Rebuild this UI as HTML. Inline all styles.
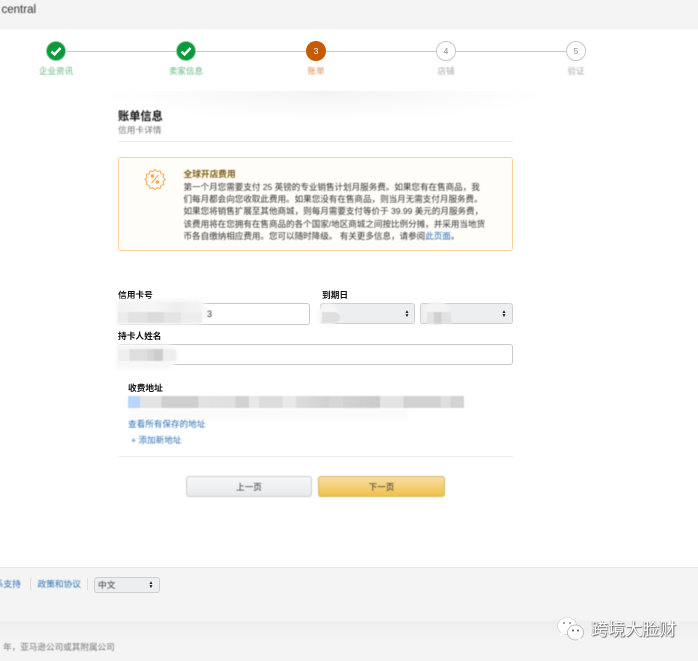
<!DOCTYPE html>
<html><head><meta charset="utf-8">
<style>
html,body{margin:0;padding:0;background:#fff}
#p{position:relative;width:698px;height:661px;overflow:hidden;background:#fff;font-family:"Liberation Sans","Noto Sans CJK SC",sans-serif;color:#222}
#p div,#p svg{position:absolute}
.t{white-space:nowrap;filter:blur(.4px)}
.c{width:20px;height:20px;border-radius:50%;top:41px;text-align:center;font-size:8.5px;line-height:20px;box-sizing:border-box}
.l{top:65px;width:60px;text-align:center;font-size:8.5px;line-height:12px;white-space:nowrap;filter:blur(.4px)}
.lb{font-size:8.7px;font-weight:bold;line-height:12px;white-space:nowrap;color:#111;filter:blur(.3px)}
.inp{background:#fff;border:1px solid #c9c9c9;border-radius:3px;box-sizing:border-box}
.sel{background:#eceef0;border:1px solid #cfcfcf;border-radius:3px;box-sizing:border-box}
.ar{font-size:5px;line-height:4px;color:#222;text-align:center;width:6px}
.m{filter:blur(.6px)}
</style></head><body><div id="p">
<div style="left:0;top:0;width:698px;height:29px;background:#f4f4f4"></div>
<div class="t" style="left:1.500px;top:2px;font-size:11.5px;line-height:17px;color:#333">central</div>

<div style="left:56px;top:51px;width:520px;height:1px;background:#ccc"></div>
<div class="c" style="left:46px;background:#0a9a3c;border:1px solid #8fd0a5"></div>
<svg style="left:46px;top:41px" width="20" height="20"><path d="M5.500 10.500l3 3 6-6.500" fill="none" stroke="#fff" stroke-width="2.400"/></svg>
<div class="c" style="left:176px;background:#0a9a3c;border:1px solid #8fd0a5"></div>
<svg style="left:176px;top:41px" width="20" height="20"><path d="M5.500 10.500l3 3 6-6.500" fill="none" stroke="#fff" stroke-width="2.400"/></svg>
<div class="c" style="left:306px;background:#c55a00;color:#fff">3</div>
<div class="c" style="left:436px;background:#fff;border:1px solid #c8c8c8;color:#888;line-height:18px">4</div>
<div class="c" style="left:566px;background:#fff;border:1px solid #c8c8c8;color:#888;line-height:18px">5</div>
<div class="l" style="left:26px;color:#62b67f">企业资讯</div>
<div class="l" style="left:156px;color:#62b67f">卖家信息</div>
<div class="l" style="left:286px;color:#dc8f55">账单</div>
<div class="l" style="left:416px;color:#aaa">店铺</div>
<div class="l" style="left:546px;color:#aaa">验证</div>

<div style="left:98px;top:91px;width:452px;height:30px;background:radial-gradient(ellipse 50% 100% at 50% 0,#f3f3f3 0,#f9f9f9 45%,#fff 100%)"></div>

<div class="t" style="left:118px;top:109.500px;font-size:11.200px;font-weight:bold;line-height:15px;color:#111">账单信息</div>
<div class="t" style="left:118px;top:124px;font-size:8.700px;line-height:12px;color:#777">信用卡详情</div>
<div style="left:118px;top:141px;width:395px;height:1px;background:#eee"></div>

<div style="left:118px;top:157px;width:395px;height:94px;box-sizing:border-box;background:#fffdf9;border:1px solid #f9d49a;border-radius:3px"></div>
<svg style="left:144px;top:168px" width="22" height="22" viewBox="0 0 22 22" fill="none" stroke="#f8a94f" stroke-width="1"><path d="M11 1.500l2.200 2.100 2.900-.8.900 2.900 2.900.9-.8 2.900 2.100 2-2.100 2.200.8 2.900-2.900.9-.9 2.900-2.900-.8-2.200 2.100-2-2.100-2.900.8-.9-2.900-2.900-.9.8-2.900-2.100-2.200 2.100-2-.8-2.900 2.900-.9.900-2.900 2.900.8z"/><path d="M7.500 15l7-8"/><circle cx="8.500" cy="8" r="1.300" fill="#f8a94f"/><circle cx="13.500" cy="14" r="1.300" fill="#f8a94f"/></svg>
<div class="t" style="left:183.500px;top:168px;font-size:8.700px;font-weight:bold;line-height:12px;color:#7f5f10">全球开店费用</div>
<div class="t" style="left:183.500px;top:180.500px;font-size:8.560px;line-height:12.400px;color:#333">第一个月您需要支付 25 英镑的专业销售计划月服务费。如果您有在售商品，我<br>们每月都会向您收取此费用。如果您没有在售商品，则当月无需支付月服务费。<br>如果您将销售扩展至其他商城，则每月需要支付等价于 39.99 美元的月服务费，<br>该费用将在您拥有在售商品的各个国家/地区商城之间按比例分摊，并采用当地货<br>币各自缴纳相应费用。您可以随时降级。 有关更多信息，请参阅<span style="color:#2a72b8">此页面</span>。</div>

<div class="lb" style="left:118px;top:289px">信用卡号</div>
<div class="lb" style="left:322px;top:289px">到期日</div>
<div class="inp" style="left:118px;top:303px;width:192px;height:22px"></div>
<div class="m" style="left:116px;top:299px;width:92px;height:26px;border-radius:0 14px 14px 0;background:#f8f8f8;filter:blur(1.500px)"></div>
<div class="m" style="left:118px;top:302px;width:84px;height:10px;background:linear-gradient(90deg,#f2f2f2,#f7f7f7 40%,#eeeeee 70%,#f5f5f5)"></div>
<div class="m" style="left:118px;top:312px;width:84px;height:11px;background:linear-gradient(90deg,#ececec 0,#ececec 12%,#e2e2e2 12%,#e2e2e2 35%,#dcdcdc 35%,#dcdcdc 55%,#e4e4e4 55%,#e4e4e4 75%,#ededed 75%)"></div>
<div class="t" style="left:207px;top:308px;font-size:9px;line-height:12px;color:#333">3</div>
<div class="sel" style="left:320px;top:303px;width:95px;height:21px"></div>
<div class="ar" style="left:404px;top:310px">▲<br>▼</div>
<div style="left:317px;top:304px;width:22px;height:22px;background:#f7f7f7;border-radius:50%;filter:blur(1.500px)"></div>
<div class="m" style="left:322px;top:312px;width:18px;height:11px;background:#dfdfdf;border-radius:0 6px 6px 0"></div>
<div class="sel" style="left:420px;top:303px;width:93px;height:21px"></div>
<div class="ar" style="left:501px;top:310px">▲<br>▼</div>
<div style="left:424px;top:301px;width:26px;height:24px;background:#f4f4f4;border-radius:50%;filter:blur(1.500px)"></div>
<div class="m" style="left:427px;top:312px;width:24px;height:12px;background:linear-gradient(90deg,#e3e3e3 0,#e3e3e3 30%,#d0d0d0 30%,#d0d0d0 60%,#e2e2e2 60%)"></div>

<div class="lb" style="left:118px;top:330px">持卡人姓名</div>
<div class="inp" style="left:118px;top:344px;width:395px;height:21px"></div>
<div style="left:116px;top:344px;width:62px;height:25px;border-radius:0 14px 14px 0;background:#f8f8f8;filter:blur(1.500px)"></div>
<div class="m" style="left:118px;top:349px;width:58px;height:12px;background:linear-gradient(90deg,#efefef 0,#efefef 20%,#dedede 20%,#dedede 50%,#d6d6d6 50%,#d6d6d6 62%,#cfcccc 62%,#cfcccc 78%,#eee 78%)"></div>

<div class="lb" style="left:128px;top:382px">收费地址</div>
<div style="left:128px;top:408px;width:280px;height:12px;background:#fbfbfb;filter:blur(1px)"></div>
<div class="m" style="left:128px;top:396px;width:336px;height:12px;background:linear-gradient(90deg,#b8d6fb 0,#b8d6fb 3.600%,#e4e4e4 3.600%,#e4e4e4 10%,#cfcfcf 10%,#cfcfcf 21%,#e3e3e3 21%,#dfdfdf 32%,#d2d2d2 32%,#d2d2d2 36%,#e8e8e8 36%,#e8e8e8 39%,#dcdcdc 39%,#dcdcdc 46%,#e9e9e9 46%,#e9e9e9 50%,#dddddd 50%,#d1d1d1 60%,#d6d6d6 60%,#d6d6d6 64%,#d2d2d2 64%,#cbcbcb 75%,#e4e4e4 75%,#e4e4e4 82%,#d2d2d2 82%,#d2d2d2 93%,#dfdfdf 93%,#dfdfdf 96%,#d3d3d3 96%)"></div>
<div class="t" style="left:128px;top:418px;font-size:8.600px;line-height:12px;color:#2a72b8">查看所有保存的地址</div>
<div class="t" style="left:131px;top:434px;font-size:8.600px;line-height:12px;color:#2a72b8">+ 添加新地址</div>
<div style="left:118px;top:456px;width:395px;height:1px;background:#eee"></div>

<div class="t" style="left:186px;top:476px;width:126px;height:21px;box-sizing:border-box;border:1px solid #ccc;border-radius:3px;background:linear-gradient(#f6f7f9,#e8e9ec);font-size:8.600px;line-height:20px;text-align:center;color:#333">上一页</div>
<div class="t" style="left:318px;top:476px;width:127px;height:21px;box-sizing:border-box;border:1px solid #d9b45c;border-radius:3px;background:linear-gradient(#f7dfa5,#f0c14b);font-size:8.600px;line-height:20px;text-align:center;color:#333">下一页</div>

<div style="left:0;top:567px;width:698px;height:94px;background:#f4f4f4;border-top:1px solid #e7e7e7;box-sizing:border-box"></div>
<div style="left:0;top:621px;width:698px;height:18px;background:linear-gradient(#ededed,#f4f4f4)"></div>
<div class="t" style="left:-14px;top:578px;font-size:8.700px;line-height:12px;color:#2a72b8">联系支持</div>
<div style="left:30px;top:578px;width:1px;height:12px;background:#ddd"></div>
<div class="t" style="left:37.500px;top:578px;font-size:8.700px;line-height:12px;color:#2a72b8">政策和协议</div>
<div style="left:87px;top:578px;width:1px;height:12px;background:#ddd"></div>
<div class="sel" style="left:94px;top:577px;width:66px;height:16px"></div>
<div class="t" style="left:98px;top:579px;font-size:8.700px;line-height:12px;color:#333">中文</div>
<div class="ar" style="left:148px;top:581px">▲<br>▼</div>
<div class="t" style="left:3px;top:641px;font-size:8.600px;line-height:12px;color:#777">年，亚马逊公司或其附属公司</div>

<svg style="left:556px;top:616px" width="30" height="26" viewBox="0 0 30 26"><ellipse cx="11" cy="10" rx="9.500" ry="8.500" fill="#fff" stroke="#ccc" stroke-width=".6"/><path d="M5 16l-1 4 5-2.500z" fill="#fff"/><ellipse cx="19.500" cy="16.500" rx="8" ry="7.500" fill="#fff" stroke="#aaa" stroke-width=".7"/><path d="M24 22l2 3-5-2z" fill="#fff"/><circle cx="8" cy="7" r="1" fill="#888"/><circle cx="14" cy="7" r="1" fill="#888"/><circle cx="17" cy="14.500" r="1" fill="#555"/><circle cx="22" cy="14.500" r="1" fill="#555"/></svg>
<div style="left:591px;top:619px;font-size:17px;line-height:21px;color:#fff;white-space:nowrap;text-shadow:1px 1px 1px #666,-.5px 0 .5px #999">跨境大脸财</div>
</div></body></html>
